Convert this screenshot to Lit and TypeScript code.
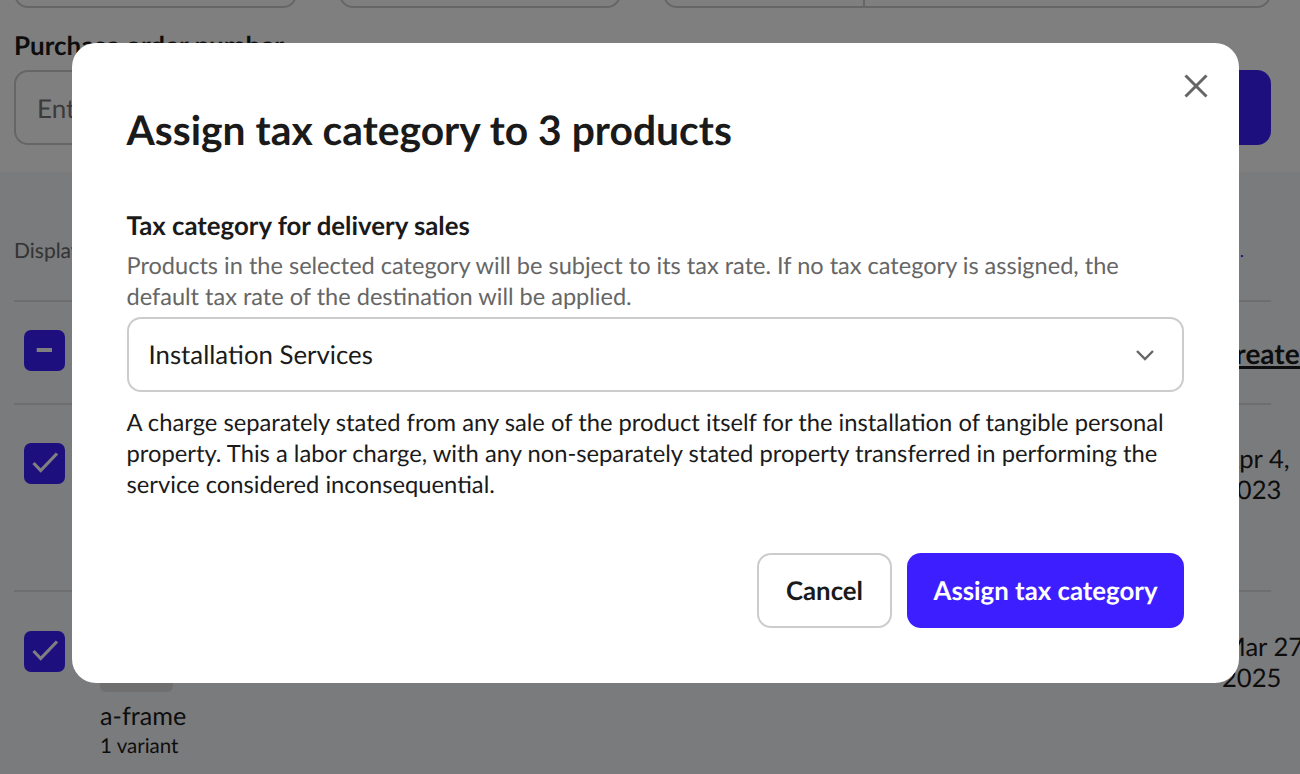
import { LitElement, html, css, svg } from 'lit';
import { customElement } from 'lit/decorators.js';

const check = svg`<path d="M9.5 20 L16.7 27.5 L33 10.5" fill="none" stroke="#fff" stroke-width="3.2"/>`;
const dash = svg`<path d="M12.7 20 H28" fill="none" stroke="#fff" stroke-width="4"/>`;

@customElement('app-root')
export class AppRoot extends LitElement {
  static styles = css`
    :host {
      display: block;
      height: 774px;
      overflow: hidden;
      font-family: Lato, 'Liberation Sans', sans-serif;
      text-rendering: geometricPrecision;
      color: #1a1a1a;
    }

    * {
      box-sizing: border-box;
    }

    .page {
      position: relative;
      height: 774px;
      overflow: hidden;
      background: #f5f6f8;
    }

    .top {
      display: flow-root;
      height: 172px;
      padding: 0 29px 0 14px;
      background: #fff;
    }

    .filters {
      display: flex;
      gap: 42px;
      height: 40px;
      margin-top: -32px;
    }

    .field {
      flex: 0 0 282.5px;
      border: 2px solid #ccc;
      border-radius: 14px;
    }

    .field.wide {
      flex: 1;
      display: flex;
    }

    .field.wide div {
      width: 200px;
      border-right: 2px solid #ccc;
    }

    .top-label {
      margin-top: 23px;
      font-size: 26px;
      font-weight: 700;
      line-height: 28px;
    }

    .po-row {
      display: flex;
      gap: 16px;
      margin-top: 11px;
      height: 75px;
    }

    .po-input {
      flex: 1;
      display: flex;
      align-items: center;
      padding-left: 21px;
      border: 2px solid #ccc;
      border-radius: 14px;
      font-size: 26px;
      color: #777;
    }

    .po-button {
      width: 160px;
      border-radius: 14px;
      background: #3d1eff;
    }

    .list {
      padding: 0 29px 0 14px;
    }

    .display {
      display: flex;
      justify-content: space-between;
      align-items: center;
      height: 130px;
      padding-top: 28px;
      border-bottom: 2px solid #dcdcdc;
      font-size: 21px;
      color: #666;
    }

    .link {
      margin-right: 27px;
      color: #3d1eff;
      font-size: 18px;
    }

    .row {
      display: flex;
      border-bottom: 2px solid #dcdcdc;
    }

    .row.head {
      height: 103px;
      padding-top: 28px;
    }

    .row.item {
      height: 187px;
      padding-top: 38px;
    }

    .row.last {
      border-bottom: 0;
      padding-top: 39px;
      height: 200px;
    }

    .box {
      flex: none;
      width: 41px;
      height: 41px;
      margin-left: 10px;
      border-radius: 7px;
      background: #3d1eff;
    }

    .box svg {
      display: block;
    }

    .product {
      flex: 1;
      margin: 0 0 0 35px;
    }

    .thumb {
      width: 73px;
      height: 61px;
      border-radius: 6px;
      background: #dedfe1;
    }

    .name {
      margin-top: 9px;
      font-size: 25.2px;
      line-height: 30px;
    }

    .variants {
      font-size: 20.5px;
      line-height: 31px;
    }

    .created {
      margin: 7px -44.5px 0 0;
      font-size: 28px;
      font-weight: 700;
      text-decoration: underline;
      text-decoration-thickness: 3px;
      line-height: 32px;
      white-space: nowrap;
    }

    .date {
      width: 78px;
      margin-top: 1px;
      margin-right: -29px;
      font-size: 25.6px;
      line-height: 31px;
      white-space: nowrap;
    }

    .scrim {
      position: absolute;
      inset: 0;
      display: flex;
      align-items: flex-start;
      padding: 43px 0 0 72px;
      background: rgba(0, 0, 0, 0.5);
    }

    .dialog {
      position: relative;
      width: 1167px;
      height: 640px;
      padding: 60px 55px 0 54.5px;
      border-radius: 24px;
      background: #fff;
    }

    .close {
      position: absolute;
      top: 30px;
      right: 30px;
      display: block;
    }

    h1 {
      margin: 0;
      font-size: 40.8px;
      font-weight: 700;
      line-height: 54px;
      color: #1a1a1a;
    }

    .label {
      margin-top: 54px;
      font-size: 25.8px;
      font-weight: 700;
      line-height: 30px;
    }

    .hint {
      margin-top: 10px;
      font-size: 23.55px;
      line-height: 31px;
      color: #666;
    }

    .select {
      display: flex;
      align-items: center;
      justify-content: space-between;
      height: 75px;
      margin-top: 4px;
      padding: 1px 27px 0 20px;
      border: 2px solid #ccc;
      border-radius: 14px;
      font-size: 25.8px;
    }

    .desc {
      margin-top: 16px;
      font-size: 23.75px;
      line-height: 31px;
    }

    .actions {
      display: flex;
      justify-content: flex-end;
      gap: 15px;
      margin-top: 52px;
    }

    button {
      height: 75px;
      border-radius: 14px;
      font: 700 25.8px Lato, 'Liberation Sans', sans-serif;
      text-rendering: geometricPrecision;
    }

    .cancel {
      width: 135px;
      border: 2px solid #ccc;
      background: #fff;
      color: #1a1a1a;
    }

    .assign {
      width: 277px;
      border: 0;
      background: #3d1eff;
      color: #fff;
    }
  `;

  render() {
    return html`
      <div class="page">
        <div class="top">
          <div class="filters">
            <div class="field"></div>
            <div class="field"></div>
            <div class="field wide"><div></div></div>
          </div>
          <div class="top-label">Purchase order number</div>
          <div class="po-row">
            <div class="po-input">Enter</div>
            <div class="po-button"></div>
          </div>
        </div>
        <div class="list">
          <div class="display"><span>Displaying</span><span class="link">.</span></div>
          <div class="row head">
            <div class="box"><svg width="41" height="41">${dash}</svg></div>
            <div class="product"></div>
            <div class="created">Created</div>
          </div>
          <div class="row item">
            <div class="box"><svg width="41" height="41">${check}</svg></div>
            <div class="product"></div>
            <div class="date">Apr 4,<br />2023</div>
          </div>
          <div class="row last">
            <div class="box"><svg width="41" height="41">${check}</svg></div>
            <div class="product">
              <div class="thumb"></div>
              <div class="name">a-frame</div>
              <div class="variants">1 variant</div>
            </div>
            <div class="date">Mar 27,<br />2025</div>
          </div>
        </div>
        <div class="scrim">
          <div class="dialog">
            <svg class="close" width="26" height="26" viewBox="0 0 26 26">
              <path d="M2.5 2.5 L23.5 23.5 M23.5 2.5 L2.5 23.5" fill="none" stroke="#666" stroke-width="3" />
            </svg>
            <h1>Assign tax category to 3 products</h1>
            <div class="label">Tax category for delivery sales</div>
            <div class="hint">
              Products in the selected category will be subject to its tax rate. If no tax category is assigned, the
              default tax rate of the destination will be applied.
            </div>
            <div class="select">
              <span>Installation Services</span>
              <svg width="20" height="12" viewBox="0 0 20 12">
                <path d="M2 2 L10 10 L18 2" fill="none" stroke="#666" stroke-width="2.4" />
              </svg>
            </div>
            <div class="desc">
              A charge separately stated from any sale of the product itself for the installation of tangible personal
              property. This a labor charge, with any non-separately stated property transferred in performing the
              service considered inconsequential.
            </div>
            <div class="actions">
              <button class="cancel">Cancel</button>
              <button class="assign">Assign tax category</button>
            </div>
          </div>
        </div>
      </div>
    `;
  }
}
